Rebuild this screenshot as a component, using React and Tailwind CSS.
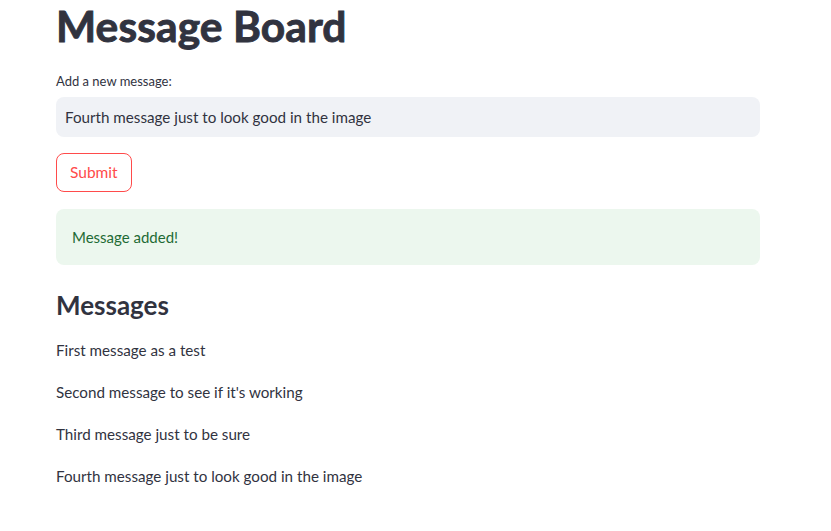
export default function App() {
  const messages = [
    'First message as a test',
    "Second message to see if it's working",
    'Third message just to be sure',
    'Fourth message just to look good in the image',
  ]

  return (
    <div className="min-h-[531px] bg-white text-[#31333f] font-['Lato','Noto_Sans',sans-serif]">
      <div className="w-[704px] ml-[56px]">
        <h1 className="text-[42.5px] font-bold leading-[52px] tracking-[0.1px] [-webkit-text-stroke:0.9px_#31333f]">
          Message Board
        </h1>

        <label className="block mt-[20px] text-[13px] leading-[18px]">Add a new message:</label>
        <div className="mt-[7px] h-[40px] rounded-lg bg-[#f0f2f6] flex items-center px-[9px] text-[15.2px]">
          Fourth message just to look good in the image
        </div>

        <button className="mt-[16px] h-[39px] px-[13px] rounded-lg border border-[#ff4b4b] text-[#ff4b4b] text-[15.5px] bg-white">
          Submit
        </button>

        <div className="mt-[17px] h-[56px] rounded-lg bg-[#ecf7ee] flex items-center px-[16px] text-[15px] text-[#1f6b35]">
          Message added!
        </div>

        <h2 className="mt-[23px] text-[26px] font-bold leading-[34px]">Messages</h2>

        <div className="mt-[16px] flex flex-col gap-[18px] text-[15.2px] leading-[24px]">
          {messages.map((m) => (
            <p key={m}>{m}</p>
          ))}
        </div>
      </div>
    </div>
  )
}
